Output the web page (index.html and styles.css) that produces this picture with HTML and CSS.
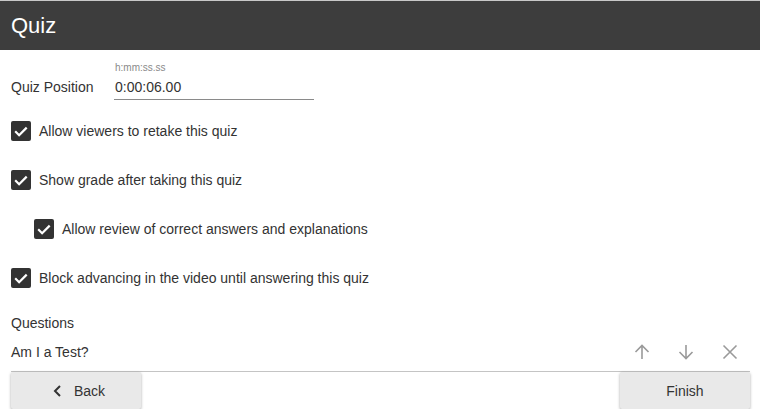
FILE: index.html
```html
<!DOCTYPE html>
<html lang="en">
<head>
<meta charset="UTF-8">
<meta name="viewport" content="width=device-width, initial-scale=1.0">
<title>Quiz</title>
<link rel="stylesheet" href="styles.css">
</head>
<body>
  <!-- ヘッダー -->
  <div class="header">Quiz</div>

  <div class="content">
    <div class="position">
      <div class="position-label">Quiz Position</div>
      <div class="field">
        <div class="hint">h:mm:ss.ss</div>
        <div class="input">0:00:06.00</div>
      </div>
    </div>

    <div class="options">
      <div class="check-row">
        <span class="box"><svg viewBox="0 0 20 20" width="20" height="20"><path d="M4.2 10.3l3.9 3.9 7.6-7.6" fill="none" stroke="#fff" stroke-width="2.2"/></svg></span>
        <span>Allow viewers to retake this quiz</span>
      </div>
      <div class="check-row">
        <span class="box"><svg viewBox="0 0 20 20" width="20" height="20"><path d="M4.2 10.3l3.9 3.9 7.6-7.6" fill="none" stroke="#fff" stroke-width="2.2"/></svg></span>
        <span>Show grade after taking this quiz</span>
      </div>
      <div class="check-row indent">
        <span class="box"><svg viewBox="0 0 20 20" width="20" height="20"><path d="M4.2 10.3l3.9 3.9 7.6-7.6" fill="none" stroke="#fff" stroke-width="2.2"/></svg></span>
        <span>Allow review of correct answers and explanations</span>
      </div>
      <div class="check-row">
        <span class="box"><svg viewBox="0 0 20 20" width="20" height="20"><path d="M4.2 10.3l3.9 3.9 7.6-7.6" fill="none" stroke="#fff" stroke-width="2.2"/></svg></span>
        <span>Block advancing in the video until answering this quiz</span>
      </div>
    </div>

    <div class="questions-title">Questions</div>
    <div class="question">
      <span class="question-text">Am I a Test?</span>
      <div class="question-actions">
        <span class="icon-btn"><svg viewBox="0 0 16 16" width="16" height="16"><path d="M8 15V1.5M1.5 8L8 1.5 14.5 8" fill="none" stroke="#9a9a9a" stroke-width="1.6"/></svg></span>
        <span class="icon-btn"><svg viewBox="0 0 16 16" width="16" height="16"><path d="M8 1v13.5M1.5 8L8 14.5 14.5 8" fill="none" stroke="#9a9a9a" stroke-width="1.6"/></svg></span>
        <span class="icon-btn"><svg viewBox="0 0 16 16" width="16" height="16"><path d="M1.5 1.5l13 13M14.5 1.5l-13 13" fill="none" stroke="#9a9a9a" stroke-width="1.6"/></svg></span>
      </div>
    </div>

    <div class="footer">
      <div class="btn back">
        <svg viewBox="0 0 8 12" width="8" height="12"><path d="M7 1L2 6l5 5" fill="none" stroke="#333" stroke-width="2"/></svg>
        <span>Back</span>
      </div>
      <div class="btn">Finish</div>
    </div>
  </div>
</body>
</html>
```

FILE: styles.css
```css
body {
  margin: 0;
  padding: 0;
  font-family: 'Liberation Sans', Arial, sans-serif;
  font-size: 14px;
  color: #333;
  background: #fff;
  overflow: hidden;
}

.header {
  height: 49px;
  border-top: 1px solid #c8c8c8;
  background-color: #3d3d3d;
  color: #fff;
  font-size: 22px;
  padding-left: 11px;
  display: flex;
  align-items: center;
}

.content {
  padding: 0 10px 0 11px;
}

/* 位置入力 */
.position {
  display: flex;
  align-items: flex-end;
  margin-top: 12px;
}

.position-label {
  width: 103px;
  line-height: 20px;
  padding-bottom: 3px;
}

.field {
  width: 200px;
}

.hint {
  font-size: 10px;
  line-height: 12px;
  color: #8a8a8a;
  padding-left: 1px;
}

.input {
  line-height: 20px;
  padding: 3px 0 2px 1px;
  border-bottom: 1px solid #8a8a8a;
}

/* チェックボックス */
.options {
  margin-top: 6px;
}

.check-row {
  display: flex;
  align-items: center;
  height: 49px;
  gap: 8px;
}

.check-row.indent {
  padding-left: 23px;
}

.box {
  width: 20px;
  height: 20px;
  border-radius: 2px;
  background-color: #333;
  display: flex;
}

.questions-title {
  line-height: 20px;
  margin-top: 11px;
}

.question {
  display: flex;
  align-items: center;
  justify-content: space-between;
  height: 38px;
  border-bottom: 1px solid #c4c4c4;
}

.question-actions {
  display: flex;
  gap: 4px;
}

.icon-btn {
  width: 40px;
  height: 30px;
  display: flex;
  align-items: center;
  justify-content: center;
}

/* 下部のボタン */
.footer {
  display: flex;
  justify-content: space-between;
}

.btn {
  width: 130px;
  height: 37px;
  background-color: #e9e9e9;
  border-radius: 2px;
  box-shadow: 0 1px 3px rgba(0, 0, 0, 0.35);
  display: flex;
  align-items: center;
  justify-content: center;
  gap: 13px;
}

.btn.back {
  padding-left: 6px;
  box-sizing: border-box;
}
```
